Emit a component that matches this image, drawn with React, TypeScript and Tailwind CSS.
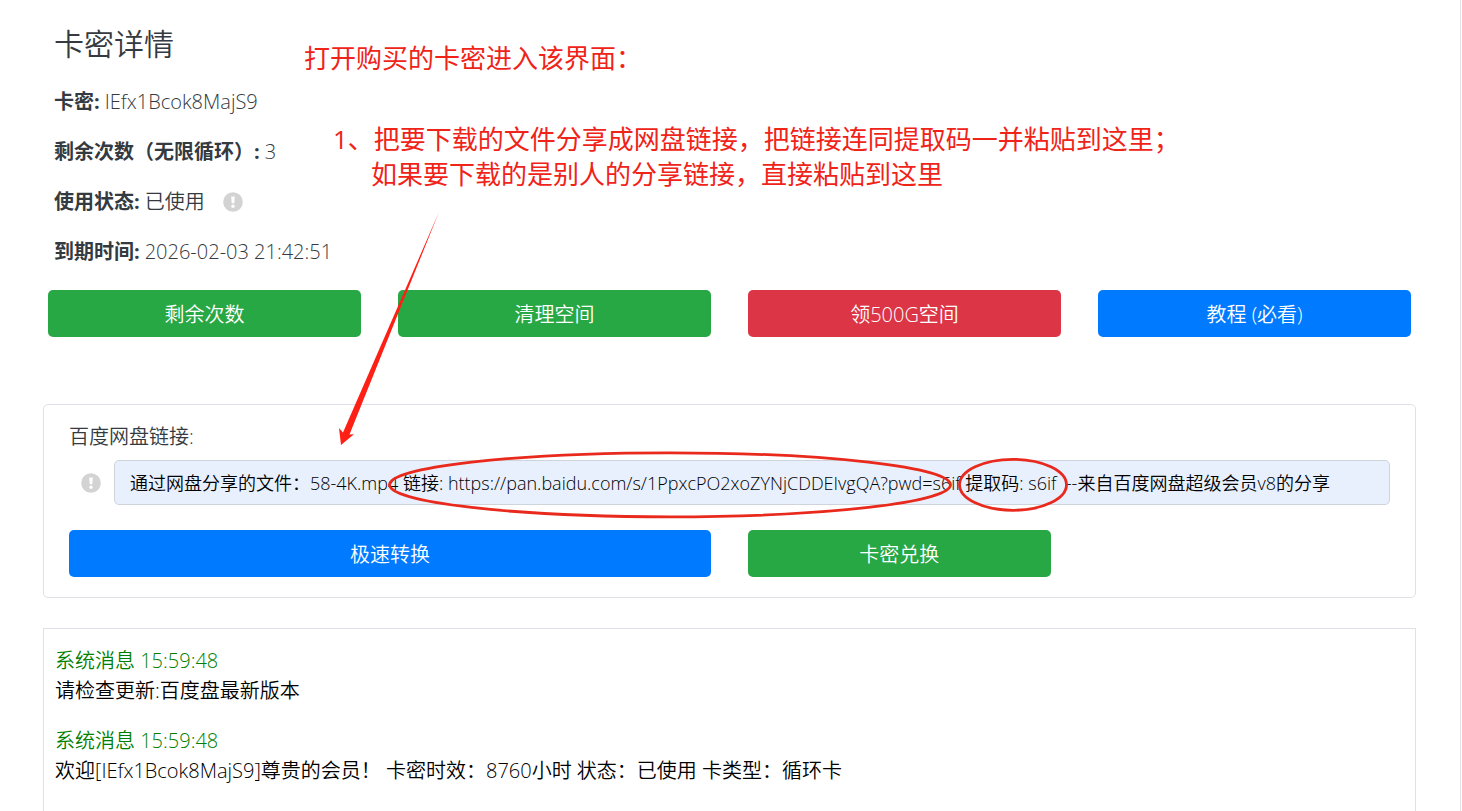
import React from 'react';
import clsx from 'clsx';

interface Message {
  id: number;
  title: string;
  time: string;
  body: string;
}

const ACTIONS = [
  { label: '剩余次数', color: 'bg-[#28a745]' },
  { label: '清理空间', color: 'bg-[#28a745]' },
  { label: '领500G空间', color: 'bg-[#dc3545]' },
  { label: '教程 (必看)', color: 'bg-[#007bff]' },
];

const MESSAGES: Message[] = [
  { id: 1, title: '系统消息', time: '15:59:48', body: '请检查更新:百度盘最新版本' },
  {
    id: 2,
    title: '系统消息',
    time: '15:59:48',
    body: '欢迎[IEfx1Bcok8MajS9]尊贵的会员！ 卡密时效：8760小时 状态：已使用 卡类型：循环卡',
  },
];

const SHARE_TEXT =
  '通过网盘分享的文件：58-4K.mp4 链接: https://pan.baidu.com/s/1PpxcPO2xoZYNjCDDEIvgQA?pwd=s6if 提取码: s6if  --来自百度网盘超级会员v8的分享';

function HintIcon() {
  return (
    <svg viewBox="0 0 20 20" className="size-5 shrink-0" aria-hidden="true">
      <circle cx="10" cy="10" r="9.8" fill="#d3d3d3" />
      <path d="M8.2 4.4h3.6l-.5 6.9H8.7z" fill="#fff" />
      <circle cx="10" cy="14.2" r="1.7" fill="#fff" />
    </svg>
  );
}

function Field({ label, children }: { label: string; children: React.ReactNode }) {
  return (
    <p className="flex items-center">
      <strong className="font-bold mr-[5px]">{label}</strong>
      {children}
    </p>
  );
}

function ActionButton({ label, className }: { label: string; className?: string }) {
  return (
    <button type="button" className={clsx('h-[47px] rounded-[5px] pt-0.5 text-center text-white', className)}>
      {label}
    </button>
  );
}

// Red hand-drawn notes that float over the page
function Annotations() {
  return (
    <div className="absolute inset-0 pointer-events-none font-normal text-[26px] leading-[35px] text-[#f02318]">
      <p className="absolute left-[304px] top-[41px] whitespace-nowrap">打开购买的卡密进入该界面：</p>
      <div className="absolute left-[333px] top-[122px] whitespace-nowrap">
        <p>1、把要下载的文件分享成网盘链接，把链接连同提取码一并粘贴到这里；</p>
        <p className="pl-[38px]">如果要下载的是别人的分享链接，直接粘贴到这里</p>
      </div>
      <svg className="absolute left-0 top-0" width="1100" height="530" viewBox="0 0 1100 530" fill="none">
        <path d="M439 212L349.500 434.500L354 434.200L341 445L339 428L343 432.500Z" fill="#ff2015" />
        <ellipse cx="670" cy="484.800" rx="280.500" ry="32" stroke="#e8291c" strokeWidth="2.800" />
        <ellipse cx="1013" cy="484.800" rx="53.500" ry="25.500" stroke="#e8291c" strokeWidth="2.800" />
      </svg>
    </div>
  );
}

export default function App() {
  const [link, setLink] = React.useState(SHARE_TEXT);

  return (
    <div className="relative min-h-screen overflow-hidden bg-white font-['Open_Sans','Noto_Sans_CJK_SC',sans-serif] font-[350] text-[20px] leading-[30px] text-[#343a40]">
      <main className="mr-px flex min-h-screen flex-col border-r border-[#dee2e6] pl-[43px] pr-11 pt-[26px]">
        <section className="px-[11px]">
          <h1 className="mb-[25px] text-[30px] leading-9">卡密详情</h1>
          <div className="flex flex-col gap-5">
            <Field label="卡密:">IEfx1Bcok8MajS9</Field>
            <Field label="剩余次数（无限循环）:">3</Field>
            <Field label="使用状态:">
              <span className="mr-[18px]">已使用</span>
              <HintIcon />
            </Field>
            <Field label="到期时间:">2026-02-03 21:42:51</Field>
          </div>
        </section>

        <div className="mt-[23px] grid grid-cols-4 gap-[37px] px-[5px]">
          {ACTIONS.map(a => (
            <ActionButton key={a.label} label={a.label} className={a.color} />
          ))}
        </div>

        <form
          className="mt-[67px] rounded-[5px] border border-[#dee2e6] px-[25px] pb-5 pt-[17px]"
          onSubmit={e => e.preventDefault()}
        >
          <label htmlFor="share-link" className="block">百度网盘链接:</label>
          <div className="mt-2 flex items-center gap-[13px] pl-3">
            <HintIcon />
            <input
              id="share-link"
              type="text"
              value={link}
              onChange={e => setLink(e.target.value)}
              className="h-[45px] min-w-0 flex-1 rounded-[5px] border border-[#ced4da] bg-[#e8f0fe] px-[15px] pb-0.5 text-[18px] text-black outline-none"
            />
          </div>
          <div className="mt-[25px] grid grid-cols-4 gap-x-[37px]">
            <ActionButton label="极速转换" className="col-span-2 bg-[#007bff]" />
            <ActionButton label="卡密兑换" className="bg-[#28a745]" />
          </div>
        </form>

        <section className="mt-[30px] flex-1 border border-b-0 border-[#dee2e6] px-[11px] pt-[17px] text-black">
          {MESSAGES.map(m => (
            <article key={m.id} className="mb-5">
              <h2 className="text-[#008000]">{m.title} {m.time}</h2>
              <p>{m.body}</p>
            </article>
          ))}
        </section>
      </main>
      <Annotations />
    </div>
  );
}
